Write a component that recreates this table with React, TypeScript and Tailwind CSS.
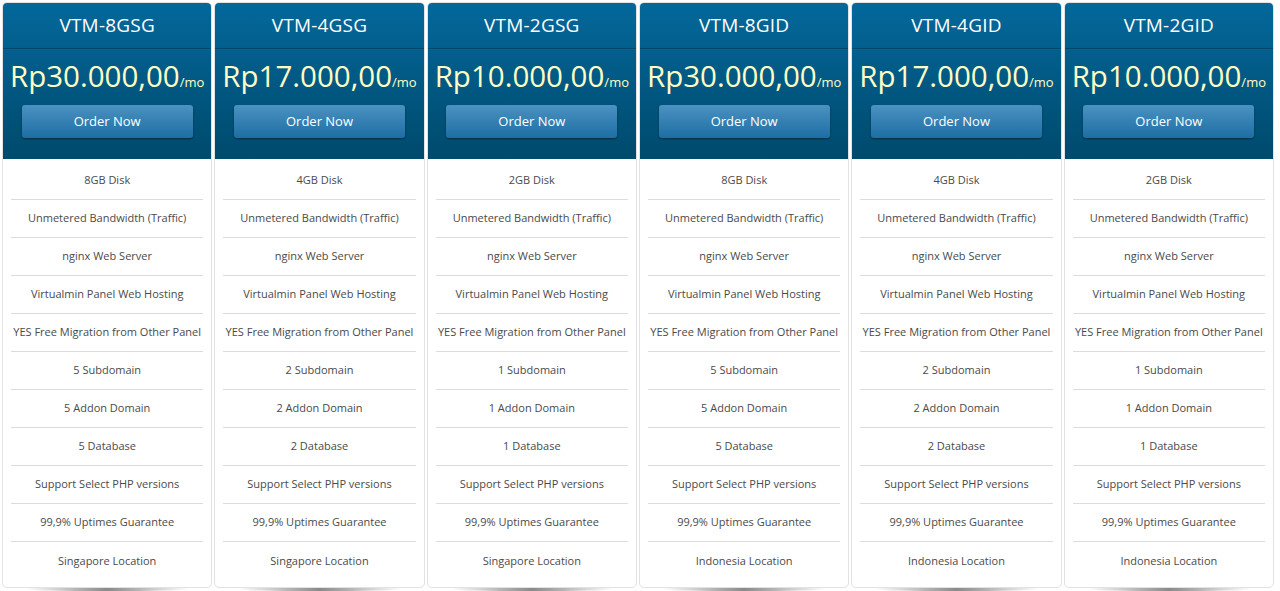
import React from 'react';

interface Plan {
  name: string;
  price: string;
  disk: string;
  subdomain: string;
  addon: string;
  database: string;
  location: string;
}

const plans: Plan[] = [
  { name: 'VTM-8GSG', price: 'Rp30.000,00', disk: '8GB Disk', subdomain: '5', addon: '5', database: '5', location: 'Singapore Location' },
  { name: 'VTM-4GSG', price: 'Rp17.000,00', disk: '4GB Disk', subdomain: '2', addon: '2', database: '2', location: 'Singapore Location' },
  { name: 'VTM-2GSG', price: 'Rp10.000,00', disk: '2GB Disk', subdomain: '1', addon: '1', database: '1', location: 'Singapore Location' },
  { name: 'VTM-8GID', price: 'Rp30.000,00', disk: '8GB Disk', subdomain: '5', addon: '5', database: '5', location: 'Indonesia Location' },
  { name: 'VTM-4GID', price: 'Rp17.000,00', disk: '4GB Disk', subdomain: '2', addon: '2', database: '2', location: 'Indonesia Location' },
  { name: 'VTM-2GID', price: 'Rp10.000,00', disk: '2GB Disk', subdomain: '1', addon: '1', database: '1', location: 'Indonesia Location' },
];

const PlanCard = ({ plan }: { plan: Plan }) => {
  // список фич тарифа
  const features = [
    plan.disk,
    'Unmetered Bandwidth (Traffic)',
    'nginx Web Server',
    'Virtualmin Panel Web Hosting',
    'YES Free Migration from Other Panel',
    `${plan.subdomain} Subdomain`,
    `${plan.addon} Addon Domain`,
    `${plan.database} Database`,
    'Support Select PHP versions',
    '99,9% Uptimes Guarantee',
    plan.location,
  ];

  return (
    <div className="px-[1px]">
      <div className="rounded-[5px] border border-[#e2e2e2] bg-white overflow-hidden">
        <div className="bg-gradient-to-b from-[#04689b] to-[#004a6d]">
          <div className="h-[46px] flex items-center justify-center border-b border-[#00476a] text-white text-[19px] tracking-[0.2px]">
            {plan.name}
          </div>
          <div className="h-[110px] border-t border-[#0a6a99]/40 flex flex-col items-center">
            <div className="mt-[11px] h-[40px] flex items-baseline text-[#ffffc4]">
              <span className="text-[29.5px] leading-none">{plan.price}</span>
              <span className="text-[13px] leading-none">/mo</span>
            </div>
            <button className="mt-[4px] w-[171px] h-[33px] rounded-[3px] bg-gradient-to-b from-[#4a92c1] to-[#1c6ea4] text-white text-[13px] shadow-[0_1px_2px_rgba(0,0,0,0.45)]">
              Order Now
            </button>
          </div>
        </div>
        <div className="pt-[3px] pb-[7px]">
          {features.map((f, i) => (
            <div
              key={i}
              className={`mx-[8px] h-[38px] flex items-center justify-center whitespace-nowrap text-[11px] text-[#4a4a4a] ${
                i !== features.length - 1 ? 'border-b border-[#dcdcdc]' : ''
              }`}
            >
              {f}
            </div>
          ))}
        </div>
      </div>
      <div className="mx-[24px] h-[3px] rounded-b-[50%] bg-gradient-to-r from-[#ffffff] via-[#8a8a8a] to-[#ffffff]" />
    </div>
  );
};

export default function App() {
  return (
    <div className="w-[1280px] h-[591px] bg-white overflow-hidden" style={{ fontFamily: '"Open Sans", "Liberation Sans", sans-serif' }}>
      <div className="ml-[1px] w-[1274px] pt-[2px] grid grid-cols-6">
        {plans.map((p) => (
          <PlanCard key={p.name} plan={p} />
        ))}
      </div>
    </div>
  );
}
